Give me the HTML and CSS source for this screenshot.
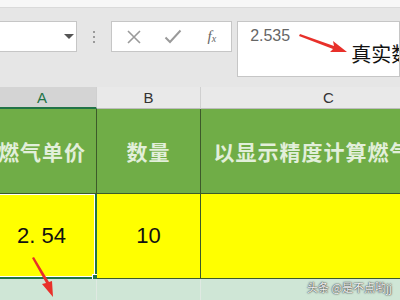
FILE: index.html
```html
<!DOCTYPE html>
<html lang="zh-CN">
<head>
    <meta charset="UTF-8">
    <title>燃气单价</title>
    <link rel="stylesheet" href="styles.css">
</head>
<body>
    <div class="top-strip"></div>
    <div class="toolbar">
        <div class="name-box"><span class="drop"></span></div>
        <div class="grip"><i></i><i></i><i></i></div>
        <div class="fbtns">
            <svg class="fb-icon" width="16" height="16" viewBox="0 0 16 16">
                <path d="M2 2 L14 14 M14 2 L2 14" stroke="#9a9a9a" stroke-width="1.6" fill="none"/>
            </svg>
            <svg class="fb-icon" width="18" height="16" viewBox="0 0 18 16">
                <path d="M1.5 8.5 L6 13 L16.5 1.5" stroke="#9a9a9a" stroke-width="2" fill="none"/>
            </svg>
            <span class="fx">f<sub>x</sub></span>
        </div>
        <div class="fbar">
            <span class="fval">2.535</span>
            <span class="note">真实数据</span>
        </div>
    </div>
    <div class="sheet">
        <div class="colhead sel">A</div>
        <div class="colhead">B</div>
        <div class="colhead">C</div>

        <div class="cell head">燃气单价</div>
        <div class="cell head">数量</div>
        <div class="cell head wide">以显示精度计算燃气费</div>

        <div class="cell val active">2. 54<span class="handle"></span></div>
        <div class="cell val">10</div>
        <div class="cell val"></div>

        <div class="cell empty"></div>
        <div class="cell empty"></div>
        <div class="cell empty"></div>
    </div>
    <svg class="arrows" width="400" height="300" viewBox="0 0 400 300">
        <path d="M300 34 L334 46 L333 41 L347 52 L330 52 L333 49 L299 36 Z" fill="#e8302a"/>
        <path d="M32 258 L46 283 L42 284 L53 297 L52 281 L49 282 L34 257 Z" fill="#e8302a"/>
    </svg>
    <div class="mark">头条 @是不点喲jj</div>
</body>
</html>
```
FILE: styles.css
```css
body {
    margin: 0;
    width: 400px;
    height: 300px;
    overflow: hidden;
    position: relative;
    background: #cfe6d6;
    font-family: "Liberation Sans", "Noto Sans CJK SC", sans-serif;
}
.top-strip {
    height: 7px;
    background: #f7f7f7;
    border-bottom: 1px solid #dadada;
}
.toolbar {
    height: 79px;
    background: #e6e6e6;
    display: flex;
    align-items: flex-start;
    padding-top: 13px;
    box-sizing: border-box;
}
.name-box {
    width: 79px;
    height: 31px;
    margin-left: -1px;
    box-sizing: border-box;
    background: #fff;
    border: 1px solid #c6c6c6;
    position: relative;
}
.drop {
    position: absolute;
    left: 64px;
    top: 12px;
    border-left: 5px solid transparent;
    border-right: 5px solid transparent;
    border-top: 5px solid #555;
}
.grip {
    width: 34px;
    height: 31px;
    display: flex;
    flex-direction: column;
    align-items: center;
    justify-content: center;
    gap: 3px;
}
.grip i {
    width: 2px;
    height: 2px;
    background: #9a9a9a;
}
.fbtns {
    width: 123px;
    height: 31px;
    box-sizing: border-box;
    background: #fff;
    border: 1px solid #c6c6c6;
    display: flex;
    align-items: center;
    padding-left: 14px;
    gap: 22px;
}
.fx {
    font-family: "Liberation Serif", serif;
    font-style: italic;
    font-size: 15px;
    color: #666;
    margin-left: 4px;
}
.fx sub {
    font-size: 10px;
    vertical-align: -1px;
}
.fbar {
    width: 165px;
    height: 56px;
    margin-left: 5px;
    box-sizing: border-box;
    background: #fff;
    border: 1px solid #c6c6c6;
    display: flex;
    align-items: flex-start;
    white-space: nowrap;
    overflow: hidden;
}
.fval {
    font-size: 16px;
    color: #666;
    margin: 5px 0 0 12px;
}
.note {
    font-family: "Noto Sans CJK SC", sans-serif;
    font-size: 20px;
    color: #111;
    margin: 17px 0 0 61px;
}
.sheet {
    margin-left: -12px;
    display: grid;
    grid-template-columns: 109px 104px 256px;
    grid-template-rows: 22px 85px 85px 30px;
}
.colhead {
    background: #e9e9e9;
    border-right: 1px solid #d0d0d0;
    border-bottom: 1px solid #bdbdbd;
    font-size: 15px;
    color: #333;
    display: flex;
    align-items: center;
    justify-content: center;
}
.colhead.sel {
    background: #d4d4d4;
    color: #217346;
    border-bottom: 2px solid #217346;
}
.cell {
    display: flex;
    align-items: center;
    justify-content: center;
    white-space: nowrap;
    overflow: hidden;
    border-right: 1px solid #3d5a2a;
    border-bottom: 1px solid #3d5a2a;
    position: relative;
}
.head {
    background: #70ad47;
    color: #e2efda;
    font-family: "Noto Sans CJK SC", sans-serif;
    font-weight: bold;
    font-size: 21px;
    letter-spacing: 1px;
}
.head.wide {
    padding-right: 10px;
}
.val {
    background: #ffff00;
    color: #111;
    font-size: 22px;
}
.active {
    overflow: visible;
    border-right: 2px solid #217346;
    border-bottom: 2px solid #217346;
    box-shadow: inset 0 1px 0 #fff, inset -1px -1px 0 #fff;
}
.handle {
    position: absolute;
    right: -5px;
    bottom: -5px;
    width: 6px;
    height: 6px;
    background: #217346;
    border: 1px solid #fff;
}
.empty {
    background: #cfe6d6;
    border-right: 1px solid #dfe9e2;
    border-bottom: none;
}
.arrows {
    position: absolute;
    left: 0;
    top: 0;
}
.mark {
    position: absolute;
    right: 8px;
    bottom: 5px;
    font-family: "Noto Sans CJK SC", sans-serif;
    font-size: 11px;
    color: #f2f2f2;
    text-shadow: 0 0 2px #333, 0 0 1px #333;
}
```
